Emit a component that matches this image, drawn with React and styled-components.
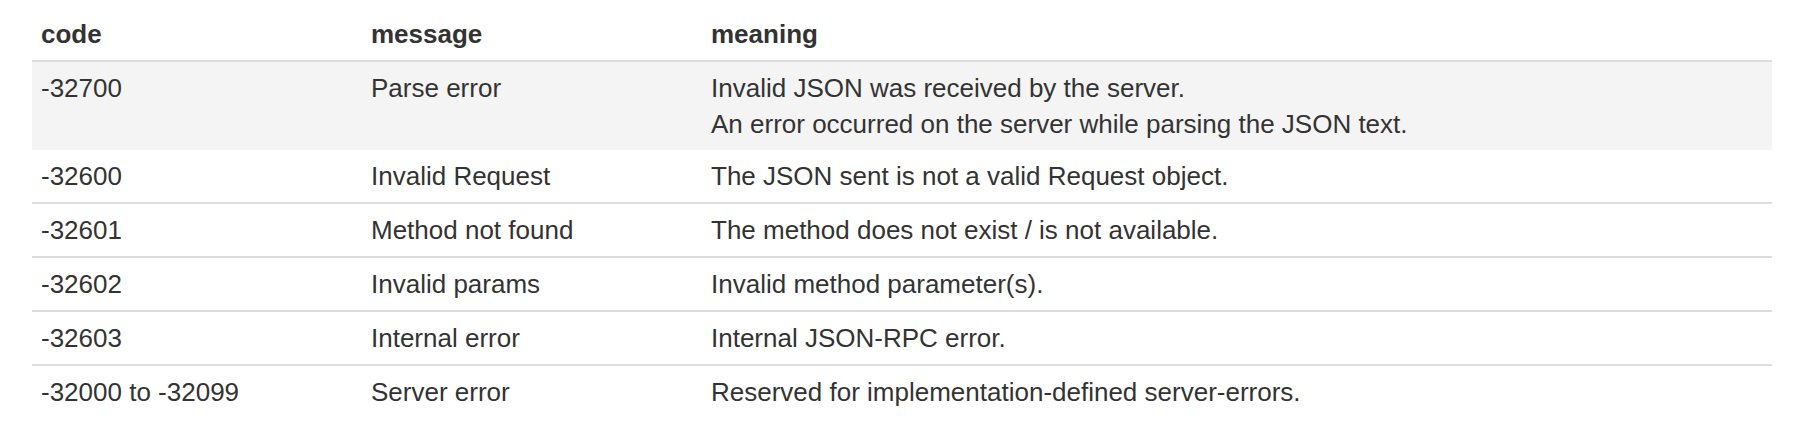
import React from 'react'
import styled, { createGlobalStyle } from 'styled-components'

const rows = [
    { code: '-32700', message: 'Parse error', meaning: ['Invalid JSON was received by the server.', 'An error occurred on the server while parsing the JSON text.'], shaded: true },
    { code: '-32600', message: 'Invalid Request', meaning: ['The JSON sent is not a valid Request object.'] },
    { code: '-32601', message: 'Method not found', meaning: ['The method does not exist / is not available.'] },
    { code: '-32602', message: 'Invalid params', meaning: ['Invalid method parameter(s).'] },
    { code: '-32603', message: 'Internal error', meaning: ['Internal JSON-RPC error.'] },
    { code: '-32000 to -32099', message: 'Server error', meaning: ['Reserved for implementation-defined server-errors.'] },
]

const App = () => {
    return (
        <>
            <GlobalStyle />
            <Page>
                <Table>
                    <colgroup>
                        <Col width="330px" />
                        <Col width="340px" />
                        <Col />
                    </colgroup>
                    <thead>
                        <tr>
                            <Th>code</Th>
                            <Th>message</Th>
                            <Th>meaning</Th>
                        </tr>
                    </thead>
                    <tbody>
                        {rows.map((r) => (
                            <Row key={r.code} shaded={r.shaded}>
                                <Td>{r.code}</Td>
                                <Td>{r.message}</Td>
                                <Td>
                                    {r.meaning.map((line, i) => (
                                        <React.Fragment key={i}>
                                            {i > 0 && <br />}
                                            {line}
                                        </React.Fragment>
                                    ))}
                                </Td>
                            </Row>
                        ))}
                    </tbody>
                </Table>
            </Page>
        </>
    )
}

const GlobalStyle = createGlobalStyle`
    html, body {
        margin: 0;
        padding: 0;
        background: #fff;
    }
    body {
        font-family: 'Liberation Sans', Arial, Helvetica, sans-serif;
        color: #333;
    }
`
const Page = styled.div`
    padding: 8px 44px 0 32px;
`
const Table = styled.table`
    width: 100%;
    border-collapse: collapse;
    border-spacing: 0;
    table-layout: fixed;
    font-size: 26px;
    line-height: 36px;
`
const Col = styled.col`
    width: ${(p) => p.width || 'auto'};
`
const Th = styled.th`
    text-align: left;
    font-weight: 700;
    padding: 8px 9px;
    border-bottom: 2px solid #ddd;
    vertical-align: bottom;
`
const Row = styled.tr.withConfig({ shouldForwardProp: (p) => p !== 'shaded' })`
    background: ${(p) => (p.shaded ? '#f4f4f4' : '#fff')};
    & + & td {
        border-top: 2px solid #ddd;
    }
`
const Td = styled.td`
    padding: 8px 9px;
    vertical-align: top;
    font-weight: 400;
`
export default App
